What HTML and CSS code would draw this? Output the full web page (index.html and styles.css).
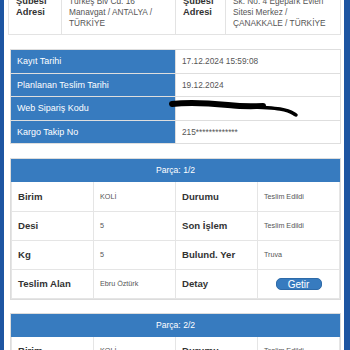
FILE: index.html
```html
<!DOCTYPE html>
<html lang="tr">
  <head>
    <meta charset="UTF-8" />
    <meta name="viewport" content="width=device-width, initial-scale=1.0" />
    <title>Kargo Takip</title>
    <link rel="stylesheet" href="styles.css">
  </head>
  <body>
    <div class="screen">
      <table class="addr">
        <colgroup>
          <col style="width: 53px" />
          <col style="width: 114px" />
          <col style="width: 50px" />
          <col />
        </colgroup>
        <tr>
          <th>Şubesi<br />Adresi</th>
          <td>Türkeş Blv Cd. 16<br />Manavgat / ANTALYA /<br />TÜRKİYE</td>
          <th>Şubesi<br />Adresi</th>
          <td>Sk. No: 4 Egepark Evleri<br />Sitesi Merkez /<br />ÇANAKKALE / TÜRKİYE</td>
        </tr>
      </table>

      <div class="info-wrap">
        <table class="info">
          <tr>
            <th>Kayıt Tarihi</th>
            <td>17.12.2024 15:59:08</td>
          </tr>
          <tr>
            <th>Planlanan Teslim Tarihi</th>
            <td>19.12.2024</td>
          </tr>
          <tr>
            <th>Web Sipariş Kodu</th>
            <td></td>
          </tr>
          <tr>
            <th>Kargo Takip No</th>
            <td>215*************</td>
          </tr>
        </table>
        <!-- redaction mark over the order code -->
        <svg class="scribble" width="140" height="20" viewBox="0 0 140 20">
          <path d="M4 5 C 20 3, 40 4, 60 6 S 85 7, 95 7" fill="none" stroke="#000" stroke-width="6" stroke-linecap="round" />
          <path d="M60 7 C 80 8, 100 8, 112 10 S 124 14, 128 16" fill="none" stroke="#000" stroke-width="3.5" stroke-linecap="round" />
        </svg>
      </div>

      <div class="parca">
        <div class="parca-head">Parça: 1/2</div>
        <table class="parca-table">
          <tr>
            <th>Birim</th>
            <td>KOLİ</td>
            <th>Durumu</th>
            <td>Teslim Edildi</td>
          </tr>
          <tr>
            <th>Desi</th>
            <td>5</td>
            <th>Son İşlem</th>
            <td>Teslim Edildi</td>
          </tr>
          <tr>
            <th>Kg</th>
            <td>5</td>
            <th>Bulund. Yer</th>
            <td>Truva</td>
          </tr>
          <tr>
            <th>Teslim Alan</th>
            <td>Ebru Öztürk</td>
            <th>Detay</th>
            <td class="center"><button class="getir">Getir</button></td>
          </tr>
        </table>
      </div>

      <div class="parca">
        <div class="parca-head">Parça: 2/2</div>
        <table class="parca-table">
          <tr>
            <th>Birim</th>
            <td>KOLİ</td>
            <th>Durumu</th>
            <td>Teslim Edildi</td>
          </tr>
          <tr>
            <th>Desi</th>
            <td>5</td>
            <th>Son İşlem</th>
            <td>Teslim Edildi</td>
          </tr>
        </table>
      </div>
    </div>
  </body>
</html>
```

FILE: styles.css
```css
* {
  box-sizing: border-box;
}

body {
  margin: 0;
  font-family: "Liberation Sans", Arial, sans-serif;
  background-color: #fff;
}

.screen {
  width: 350px;
  height: 350px;
  overflow: hidden;
  border-left: 4px solid #1d55a2;
  border-right: 6px solid #1d55a2;
  padding: 0 3px 0 4px;
}

table {
  border-collapse: collapse;
  width: 100%;
  table-layout: fixed;
}

/* address table, scrolled partly out of view */
.addr {
  margin-top: -10px;
}

.addr th,
.addr td {
  border: 1px solid #e3e3e3;
  padding: 5px 6px 5px 7px;
  vertical-align: top;
  text-align: left;
  line-height: 11px;
}

.addr th {
  font-size: 9.3px;
  color: #333;
}

.addr td {
  font-size: 8.3px;
  color: #555;
}

.info-wrap {
  position: relative;
  margin: 14px 0 0 2px;
}

.info th,
.info td {
  border: 1px solid #dedede;
  height: 23.5px;
  padding: 0 6px;
  text-align: left;
  font-weight: normal;
}

.info th {
  background-color: #377bbf;
  color: #fff;
  font-size: 9px;
}

.info td {
  color: #555;
  font-size: 8.3px;
}

.scribble {
  position: absolute;
  left: 158px;
  top: 50px;
}

.parca {
  margin: 14px 0 0 2px;
  border: 1px solid #dcdcdc;
}

.parca + .parca {
  margin-top: 13px;
}

.parca-head {
  background-color: #377bbf;
  color: #fff;
  font-size: 8.6px;
  text-align: center;
  height: 23px;
  line-height: 23px;
}

.parca-table th,
.parca-table td {
  border: 1px solid #e5e5e5;
  height: 29px;
  padding: 0 6px;
  text-align: left;
}

.parca-table tr:first-child th,
.parca-table tr:first-child td {
  border-top: none;
}

.parca-table th {
  font-size: 9.6px;
  color: #333;
}

.parca-table td {
  font-size: 7.2px;
  color: #555;
}

.parca-table td.center {
  text-align: center;
}

.getir {
  font-family: inherit;
  font-size: 10px;
  line-height: 12px;
  height: 12px;
  width: 46px;
  padding: 0;
  color: #fff;
  background-color: #377bbf;
  border: 1px solid #2e6aa8;
  border-radius: 5px;
}
```
